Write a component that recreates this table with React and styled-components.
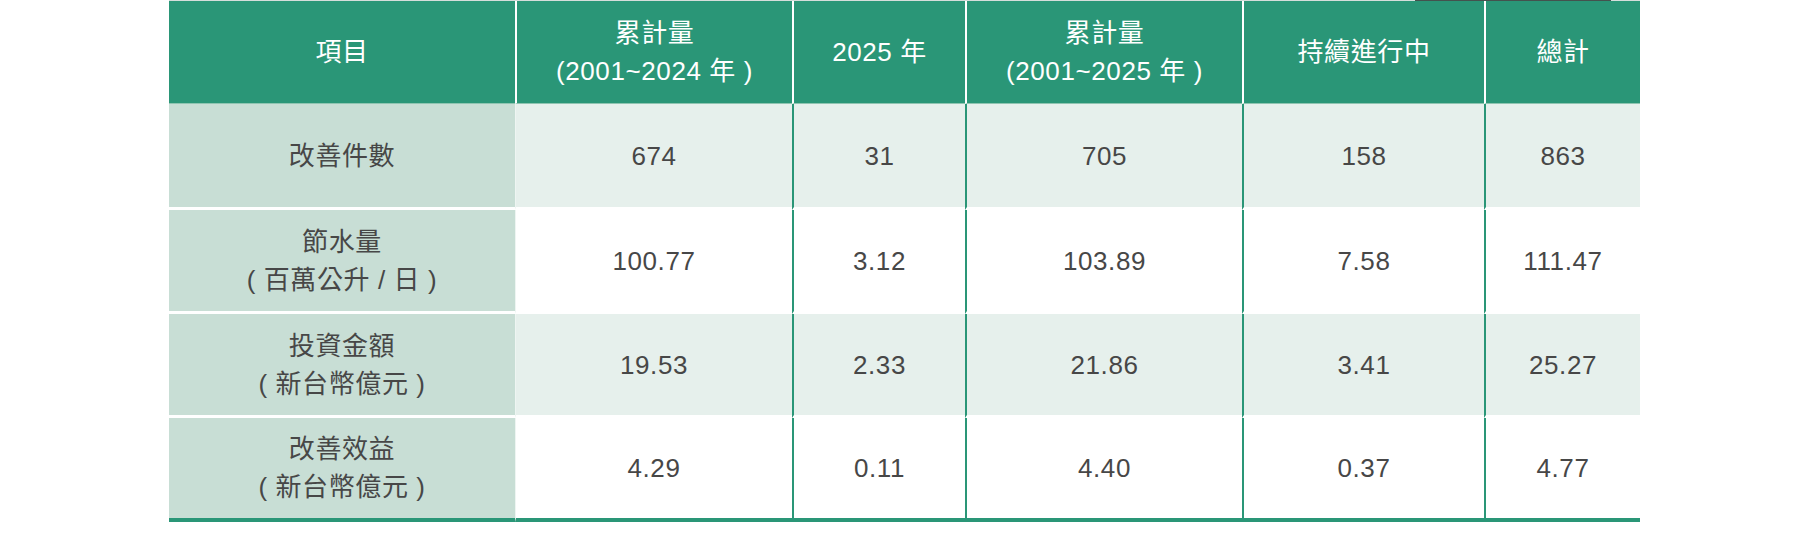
import React from "react";
import styled, { createGlobalStyle } from "styled-components";

const GlobalStyle = createGlobalStyle`
  html, body {
    margin: 0;
    padding: 0;
    background: #ffffff;
  }
  body {
    font-family: "Liberation Sans", "Noto Sans CJK TC", sans-serif;
  }
`;

const Page = styled.div`
  width: 100%;
  height: 556px;
  display: flex;
  justify-content: center;
  padding-left: 3px;
  box-sizing: border-box;
`;

const Wrapper = styled.div`
  width: 1471px;
  display: flex;
  flex-direction: column;
`;

const ScrollTrack = styled.div`
  height: 1px;
  background: #d5dedb;
`;

const ScrollThumb = styled.div`
  height: 1px;
  width: 196px;
  margin-left: 1246px;
  background: #44524e;
`;

const Table = styled.table`
  width: 1471px;
  table-layout: fixed;
  border-collapse: separate;
  border-spacing: 0;
  font-size: 26px;
  line-height: 38px;
  letter-spacing: 0.6px;
  text-align: center;
`;

const HeadCell = styled.th`
  box-sizing: content-box;
  height: 102px;
  padding: 0 10px;
  background: #2a9677;
  color: #ffffff;
  font-weight: 400;
  vertical-align: middle;
  border-bottom: 1px solid #8fc5b1;
  border-left: ${({ $first }) => ($first ? "none" : "2px solid #ffffff")};
`;

const RowHead = styled.th`
  box-sizing: content-box;
  height: ${({ $h }) => $h}px;
  padding: 0 10px;
  background: #c8ded5;
  color: #474747;
  font-weight: 400;
  vertical-align: middle;
  border-bottom: ${({ $last }) =>
    $last ? "4px solid #2a9677" : "3px solid #ffffff"};
`;

const Cell = styled.td`
  box-sizing: content-box;
  height: ${({ $h }) => $h}px;
  padding: 0 10px;
  background: ${({ $shaded }) => ($shaded ? "#e6f0ec" : "#ffffff")};
  color: #474747;
  vertical-align: middle;
  border-bottom: ${({ $last }) =>
    $last ? "4px solid #2a9677" : "3px solid #ffffff"};
  border-left: ${({ $lead }) =>
    $lead ? "1px solid #eef5f2" : "2px solid #2a9677"};
`;

const columns = [346, 277, 173, 277, 242, 156];

const headers = [
  ["項目"],
  ["累計量", "(2001~2024 年 )"],
  ["2025 年"],
  ["累計量", "(2001~2025 年 )"],
  ["持續進行中"],
  ["總計"],
];

const rows = [
  { label: ["改善件數"], height: 103, values: ["674", "31", "705", "158", "863"] },
  {
    label: ["節水量", "( 百萬公升 / 日 )"],
    height: 101,
    values: ["100.77", "3.12", "103.89", "7.58", "111.47"],
  },
  {
    label: ["投資金額", "( 新台幣億元 )"],
    height: 101,
    values: ["19.53", "2.33", "21.86", "3.41", "25.27"],
  },
  {
    label: ["改善效益", "( 新台幣億元 )"],
    height: 100,
    values: ["4.29", "0.11", "4.40", "0.37", "4.77"],
  },
];

const Lines = ({ lines }) =>
  lines.map((line, i) => (
    <React.Fragment key={i}>
      {i > 0 && <br />}
      {line}
    </React.Fragment>
  ));

const App = () => {
  return (
    <>
      <GlobalStyle />
      <Page>
        <Wrapper>
          <ScrollTrack>
            <ScrollThumb />
          </ScrollTrack>
          <Table>
            <colgroup>
              {columns.map((w, i) => (
                <col key={i} style={{ width: w }} />
              ))}
            </colgroup>
            <thead>
              <tr>
                {headers.map((h, i) => (
                  <HeadCell key={i} $first={i === 0}>
                    <Lines lines={h} />
                  </HeadCell>
                ))}
              </tr>
            </thead>
            <tbody>
              {rows.map((row, r) => {
                const last = r === rows.length - 1;
                const shaded = r % 2 === 0;
                return (
                  <tr key={r}>
                    <RowHead $last={last} $h={row.height}>
                      <Lines lines={row.label} />
                    </RowHead>
                    {row.values.map((v, c) => (
                      <Cell
                        key={c}
                        $h={row.height}
                        $last={last}
                        $shaded={shaded}
                        $lead={c === 0}
                      >
                        {v}
                      </Cell>
                    ))}
                  </tr>
                );
              })}
            </tbody>
          </Table>
        </Wrapper>
      </Page>
    </>
  );
};

export default App;
